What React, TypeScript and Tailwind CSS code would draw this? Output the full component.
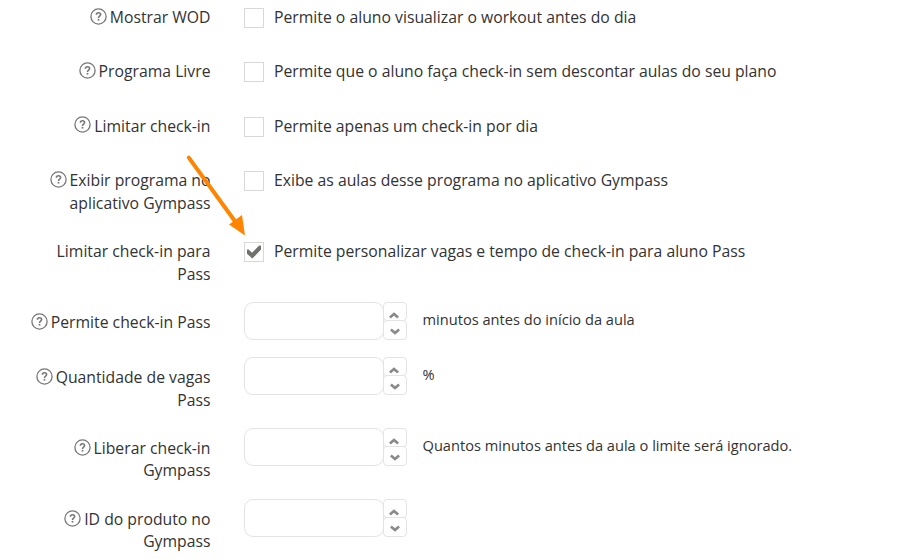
import React from "react";

interface Field {
  label: string[];
  help?: boolean;
  height: string;
  text?: string;
  type: "check" | "number";
  checked?: boolean;
}

const fields: Field[] = [
  { label: ["Mostrar WOD"], help: true, height: "h-[54px]", type: "check", text: "Permite o aluno visualizar o workout antes do dia" },
  { label: ["Programa Livre"], help: true, height: "h-[54.6px]", type: "check", text: "Permite que o aluno faça check-in sem descontar aulas do seu plano" },
  { label: ["Limitar check-in"], help: true, height: "h-[54.4px]", type: "check", text: "Permite apenas um check-in por dia" },
  { label: ["Exibir programa no", "aplicativo Gympass"], help: true, height: "h-[71px]", type: "check", text: "Exibe as aulas desse programa no aplicativo Gympass" },
  { label: ["Limitar check-in para", "Pass"], height: "h-[68px]", type: "check", checked: true, text: "Permite personalizar vagas e tempo de check-in para aluno Pass" },
  { label: ["Permite check-in Pass"], help: true, height: "h-[55.3px]", type: "number", text: "minutos antes do início da aula" },
  { label: ["Quantidade de vagas", "Pass"], help: true, height: "h-[70.7px]", type: "number", text: "%" },
  { label: ["Liberar check-in", "Gympass"], help: true, height: "h-[71px]", type: "number", text: "Quantos minutos antes da aula o limite será ignorado." },
  { label: ["ID do produto no", "Gympass"], help: true, height: "h-[58px]", type: "number" },
];

const HelpIcon: React.FC = () => (
  <svg width="17" height="17" viewBox="0 0 17 17" fill="none" stroke="#777" className="mr-[3px] inline-block align-[-1.6px]">
    <circle cx="8.5" cy="8.5" r="7.6" strokeWidth="1.3" />
    <path d="M6.4 6.7C6.4 5.4 7.2 4.8 8.5 4.8s2.1.7 2.1 1.8c0 1.5-2.1 1.7-2.1 3.3" strokeWidth="1.6" />
    <path d="M8.5 10.9v1.7" strokeWidth="1.7" />
  </svg>
);

const CheckBox: React.FC<{ checked?: boolean }> = ({ checked }) => (
  <span role="checkbox" aria-checked={!!checked} className="mt-2 block h-5 w-5 shrink-0 border border-[#d8d8d8] bg-white">
    {checked && (
      <svg width="18" height="18" viewBox="0 0 18 18" fill="#70706c">
        <path d="M2 6.6l1.6-.2L7 9.8 14.2 2.6l1.8.2V6.6L7.4 15.6 2 10.8Z" />
      </svg>
    )}
  </span>
);

const Spinner: React.FC = () => (
  <div className="flex">
    <input className="h-[38px] w-[140px] rounded-[9px] border border-[#e4e4e4] bg-white px-3 outline-none" />
    <div className="-ml-px flex w-6 flex-col">
      <button className="flex h-[19px] items-end justify-center rounded border border-[#e4e4e4] pr-0.5 pb-px">
        <svg width="10" height="7" viewBox="0 0 10 7" fill="none" stroke="#8a8a8a" strokeWidth="2.7">
          <path d="M.9 5.5L5 2l4.1 3.5" />
        </svg>
      </button>
      <button className="-mt-px flex h-5 items-center justify-center rounded border border-[#e4e4e4] pt-[3px]">
        <svg width="10" height="7" viewBox="0 0 10 7" fill="none" stroke="#8a8a8a" strokeWidth="2.7">
          <path d="M.9 1.5L5 5l4.1-3.5" />
        </svg>
      </button>
    </div>
  </div>
);

const App: React.FC = () => {
  return (
    <div className="relative h-[560px] w-[898px] overflow-hidden bg-white font-['Open_Sans',sans-serif] text-[15.76px] text-[#333]">
      {fields.map((field) => (
        <div key={field.label[0]} className={`flex items-start ${field.height}`}>
          <div className={`w-[210.5px] shrink-0 text-right whitespace-nowrap ${field.type === "number" ? "pt-[9px] leading-[22.4px]" : "pt-[6.2px] leading-[22.6px]"}`}>
            {field.label.map((line, i) => (
              <div key={line}>
                {field.help && i === 0 && <HelpIcon />}
                {line}
              </div>
            ))}
          </div>
          <div className="ml-[33.5px] flex items-start">
            {field.type === "check" ? <CheckBox checked={field.checked} /> : <Spinner />}
            {field.type === "check" ? (
              <span className="ml-2.5 pt-1.5 leading-[22.85px]">{field.text}</span>
            ) : (
              <span className="ml-[15.5px] pt-1.5 text-[14.63px] leading-[22.85px]">{field.text}</span>
            )}
          </div>
        </div>
      ))}
      <svg className="absolute left-[180px] top-[150px]" width="70" height="90" viewBox="0 0 70 90">
        <path d="M8.8 7.6L57 74" stroke="#ff8500" strokeWidth="4" strokeLinecap="round" />
        <path d="M65 85.5L49 74.5L62 65Z" fill="#ff8500" />
      </svg>
    </div>
  );
};

export default App;
